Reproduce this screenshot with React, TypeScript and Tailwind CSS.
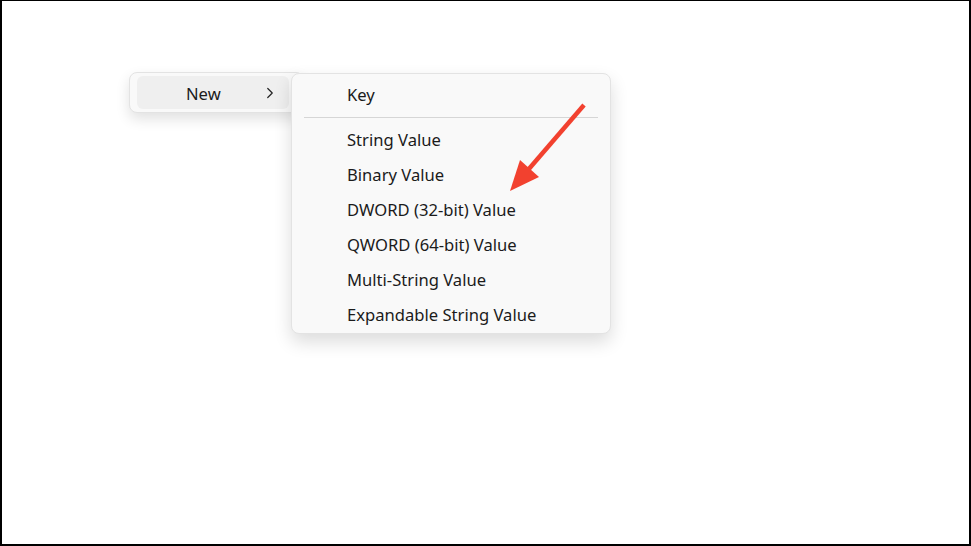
import { ChevronRight } from 'lucide-react'

const ITEMS = [
  'String Value',
  'Binary Value',
  'DWORD (32-bit) Value',
  'QWORD (64-bit) Value',
  'Multi-String Value',
  'Expandable String Value',
]

export default function App() {
  return (
    <div
      className="relative w-[971px] h-[546px] bg-white border-2 border-t border-black overflow-hidden text-[#1b1b1b]"
      style={{ fontFamily: '"Noto Sans", "Open Sans", sans-serif' }}
    >
      {/* parent menu */}
      <div className="absolute left-[127px] top-[71px] w-[175px] h-[41px] rounded-lg bg-[#f9f9f9] border border-[#e3e3e3] shadow-[0_6px_14px_rgba(0,0,0,0.12)] p-[3px] pl-[7px]">
        <div className="flex items-center h-full w-[152px] rounded-md bg-[#efefef]">
          <span className="ml-[49px] mt-[4px] text-[16.6px] leading-none">New</span>
          <ChevronRight className="ml-auto mr-[10px] h-[18px] w-[18px] text-[#222]" strokeWidth={1.6} />
        </div>
      </div>

      {/* submenu */}
      <div className="absolute left-[289px] top-[72px] w-[320px] h-[261px] rounded-lg bg-[#f9f9f9] border border-[#e3e3e3] shadow-[0_8px_18px_rgba(0,0,0,0.14)] flex flex-col pt-[4px]">
        <div className="h-[35px] flex items-center pl-[55px] text-[16.6px]">Key</div>
        <div className="mx-[12px] my-[4px] h-px bg-[#d6d6d6]" />
        <div className="flex flex-col pt-[1px]">
          {ITEMS.map((item) => (
            <div key={item} className="h-[35px] flex items-center pl-[55px] text-[16.6px]">
              {item}
            </div>
          ))}
        </div>
      </div>

      {/* annotation arrow */}
      <svg className="absolute left-0 top-0" width="971" height="546" viewBox="0 0 971 546">
        <line x1="582" y1="104" x2="526" y2="169" stroke="#f2412f" strokeWidth="4.5" strokeLinecap="butt" />
        <polygon points="508,190 518,159 537,176" fill="#f2412f" />
      </svg>
    </div>
  )
}
